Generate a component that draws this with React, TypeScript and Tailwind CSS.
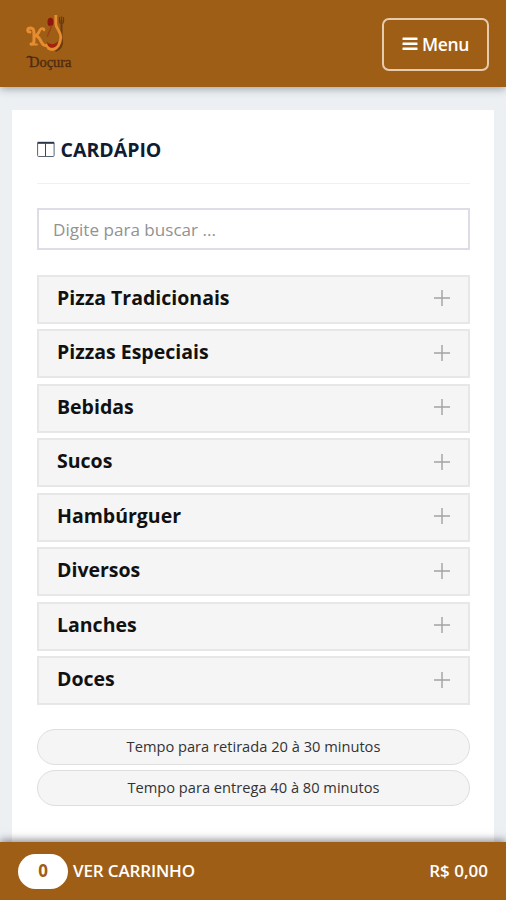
import React from 'react';

interface Category {
  id: number;
  name: string;
}

const categories: Category[] = [
  { id: 1, name: 'Pizza Tradicionais' },
  { id: 2, name: 'Pizzas Especiais' },
  { id: 3, name: 'Bebidas' },
  { id: 4, name: 'Sucos' },
  { id: 5, name: 'Hambúrguer' },
  { id: 6, name: 'Diversos' },
  { id: 7, name: 'Lanches' },
  { id: 8, name: 'Doces' },
];

const notices = ['Tempo para retirada 20 à 30 minutos', 'Tempo para entrega 40 à 80 minutos'];

function Logo() {
  return (
    <svg width="56" height="68" viewBox="22 10 56 68" className="block" aria-label="Doçura">
      {/* fork */}
      <path d="M61.500 20v19c2 6-2 11-6 12" fill="none" stroke="#6b3a10" strokeWidth="2" />
      <path d="M59.500 17v5c0 2 4 2 4 0v-5M61.500 16.500v6" fill="none" stroke="#6b3a10" strokeWidth="1.200" />
      {/* K */}
      <g fill="none" stroke="#e68d31" strokeLinecap="round">
        <path d="M30 32c-3 0-3-4 0-4 3-.5 4 2 4 5v8c0 2-1 3-3 3" strokeWidth="3" />
        <path d="M31 44.500h6" strokeWidth="1.800" />
        <path d="M35 36c3-1 4-4 5-6 1-2 4-2 4 0" strokeWidth="2.600" />
        <path d="M36 36c3 0 4 4 6 7 1 2 3 3 5 2" strokeWidth="3" />
      </g>
      {/* bowl */}
      <path
        d="M55.800 15v9c0 4 5 7 5 13s-4 12.500-8.500 12.500c-3 0-5-2-5.500-5"
        fill="none"
        stroke="#e68d31"
        strokeWidth="2.800"
      />
      {/* spoon */}
      <ellipse cx="50.500" cy="22" rx="3" ry="4.300" fill="#8f160c" />
      <path d="M51 25c1 4-3 7-3.500 12" fill="none" stroke="#9b3f15" strokeWidth="1.400" />
      <path d="M47 42c3 3 8 3 11-1 0 4-2 6.500-6 6.500-3 0-5-2-5-5.500z" fill="#a0220f" />
      <text
        x="29"
        y="67"
        textLength="42.500"
        lengthAdjust="spacingAndGlyphs"
        fill="#4f2c11"
        stroke="#4f2c11"
        strokeWidth="0.400"
        fontSize="15"
        fontFamily="'Liberation Serif', serif"
      >
        Doçura
      </text>
      <path d="M27 58c0-2 3-2 5-.5" fill="none" stroke="#4f2c11" strokeWidth="1.500" />
    </svg>
  );
}

function BarsIcon() {
  return (
    <svg width="16" height="14" viewBox="0 0 16 14" className="block" fill="currentColor">
      <rect x="0.500" y="0.500" width="15" height="2.500" rx="0.500" />
      <rect x="0.500" y="5.500" width="15" height="2.500" rx="0.500" />
      <rect x="0.500" y="10.500" width="15" height="2.500" rx="0.500" />
    </svg>
  );
}

function ColumnsIcon() {
  return (
    <svg width="18" height="16" viewBox="0 0 18 16" className="block" fill="none" stroke="#5a6372">
      <rect x="0.600" y="1.500" width="16.500" height="14" rx="1" />
      <path d="M0.500 1.800h16.700" stroke="#2a3548" strokeWidth="2" />
      <path d="M8.500 2v13" stroke="#3a4557" />
    </svg>
  );
}

function PlusIcon() {
  return (
    <svg width="16" height="16" viewBox="0 0 16 16" className="block" stroke="#a2a2a2" strokeWidth="1.400">
      <path d="M0 8h16M8 0v16" />
    </svg>
  );
}

export default function App() {
  return (
    <div className="flex h-[900px] w-full flex-col overflow-hidden bg-[#ecf0f3] font-['Open_Sans',sans-serif]">
      <header className="z-10 flex h-[87px] shrink-0 items-center justify-between bg-[#9f5e15] pr-[17px] pl-[22px] pt-px shadow-[0_2px_8px_rgba(60,70,85,0.45)]">
        <Logo />
        <button className="flex h-[53px] w-[107px] items-center justify-center gap-1 rounded-[7px] border-2 border-[#e6cbae] text-[17.500px] font-semibold text-white">
          <BarsIcon />
          <span className="tracking-[-0.400px]">Menu</span>
        </button>
      </header>

      <main className="min-h-0 flex-1 px-[12px] pt-[23px]">
        <section className="h-full bg-white pr-[24px] pl-[25px] pt-[26px]">
          <h1 className="flex h-[48px] items-start gap-[5.500px] border-b border-[#eef0f2] text-[19.500px] font-bold leading-[28px] text-[#111c33]">
            <span className="pt-[5px]">
              <ColumnsIcon />
            </span>
            CARDÁPIO
          </h1>

          <input
            type="text"
            placeholder="Digite para buscar ..."
            className="mt-[24px] block h-[42px] w-full border-2 border-[#dcdde6] bg-white px-[14px] text-[17.100px] placeholder-[#929292] outline-none"
          />

          <ul className="mt-[25px] flex flex-col gap-[5.600px]">
            {categories.map((c) => (
              <li
                key={c.id}
                className="flex h-[48.900px] items-center justify-between border-2 border-[#e7e7e8] bg-[#f5f5f5] pr-[18px] pl-[18px] text-[19.500px] font-bold text-[#111]"
              >
                <span className="pb-[4px]">{c.name}</span>
                <span className="pb-[2px]">
                  <PlusIcon />
                </span>
              </li>
            ))}
          </ul>

          <div className="mt-[24px] flex flex-col gap-[5px]">
            {notices.map((n) => (
              <p
                key={n}
                className="flex h-[36px] items-center justify-center rounded-full border border-[#dedede] bg-[#f5f5f5] text-[14.650px] text-[#333]"
              >
                {n}
              </p>
            ))}
          </div>
        </section>
      </main>

      <footer className="z-10 flex h-[58px] shrink-0 items-center justify-between bg-[#9f5e15] pr-[18px] pl-[18px] text-[17px] text-white shadow-[0_-2px_8px_rgba(60,60,75,0.6)]">
        <div className="flex items-center gap-[5px]">
          <span className="flex h-[35px] w-[50px] items-center justify-center rounded-full bg-white font-bold text-[#9f5e15]">
            0
          </span>
          <span className="font-semibold tracking-[-0.150px]">VER CARRINHO</span>
        </div>
        <span className="font-semibold">R$ 0,00</span>
      </footer>
    </div>
  );
}
